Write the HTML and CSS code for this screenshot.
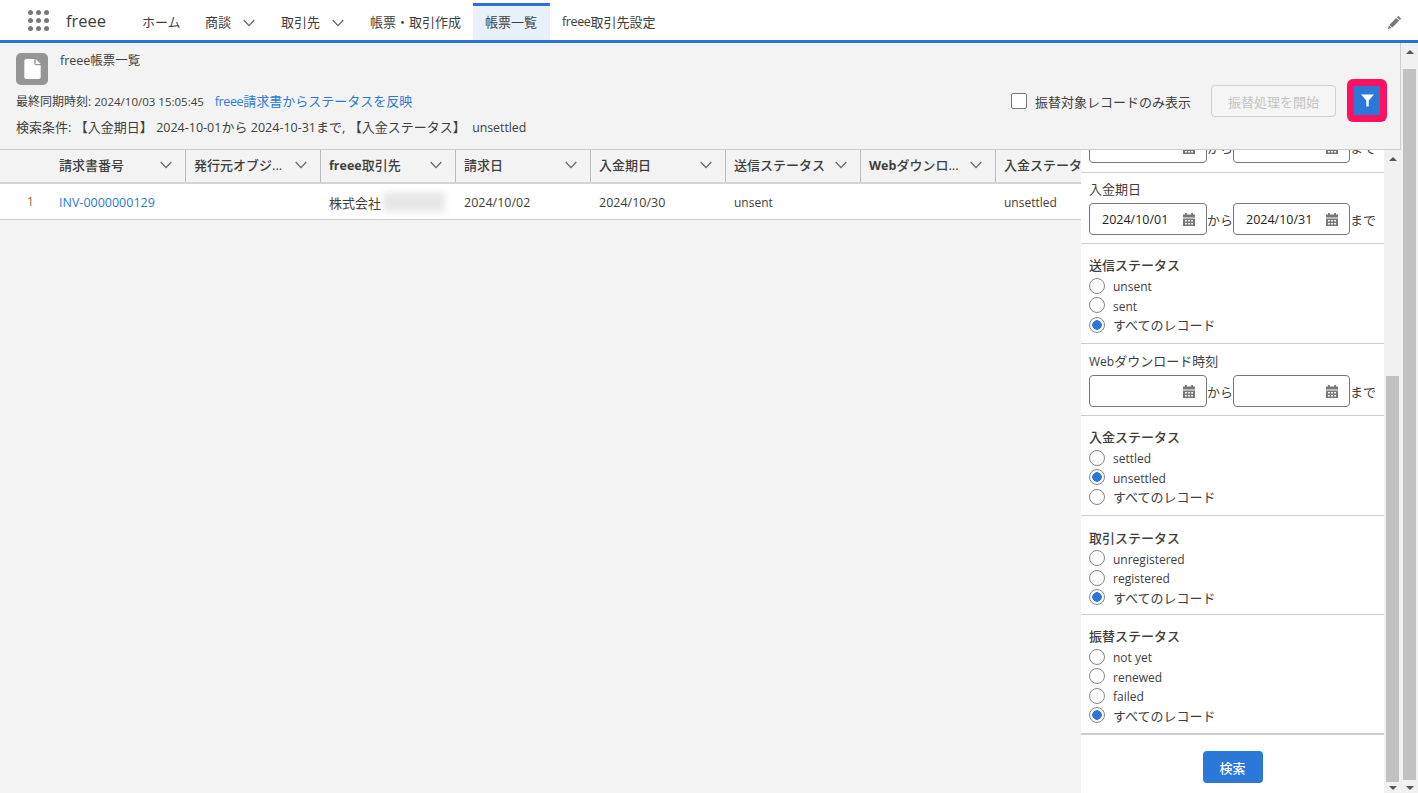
FILE: index.html
```html
<!DOCTYPE html>
<html lang="ja">
<head>
    <meta charset="UTF-8">
    <title>freee帳票一覧</title>
    <link rel="stylesheet" href="styles.css">
</head>
<body>
    <svg class="defs" width="0" height="0">
        <symbol id="chev" viewBox="0 0 12 8"><path d="M.7 1 6 6.600 11.300 1" fill="none" stroke="#666" stroke-width="1.300"/></symbol>
        <symbol id="cal" viewBox="0 0 12 13"><path d="M2 0h1.800v1.500h4.400V0H10v1.500h2v3H0v-3h2zM0 5.500h12V13H0z" fill="#777"/><path d="M2 7h1.800v1.500H2zM5.100 7h1.800v1.500H5.100zM8.200 7H10v1.500H8.200zM2 10h1.800v1.500H2zM5.100 10h1.800v1.500H5.100zM8.200 10H10v1.500H8.200z" fill="#fff"/></symbol>
    </svg>
    <div class="nav">
        <div class="apps">
            <i></i><i></i><i></i><i></i><i></i><i></i><i></i><i></i><i></i>
        </div>
        <div class="app_name">freee</div>
        <div class="tabs">
            <a class="tab t1">ホーム</a>
            <a class="tab t2">商談<svg class="nav_chev"><use href="#chev"/></svg></a>
            <a class="tab t3">取引先<svg class="nav_chev"><use href="#chev"/></svg></a>
            <a class="tab t4">帳票・取引作成</a>
            <a class="tab t5 active">帳票一覧</a>
            <a class="tab t6"><span class="lat">freee</span>取引先設定</a>
        </div>
        <svg class="pencil" viewBox="0 0 14 14"><path d="M10.300.8 13.200 3.700 11.800 5.100 8.900 2.200zM8.200 2.900 11.100 5.800 4.300 12.600 1.400 9.700zM.9 10.500 3.500 13.100 0 14z" fill="#777"/></svg>
    </div>
    <div class="page">
        <div class="content">
            <div class="head">
                <div class="head_left">
                    <div class="title_row">
                        <div class="doc_icon">
                            <svg viewBox="0 0 18 22" width="17" height="20"><path d="M2 0h9v5a2 2 0 0 0 2 2h5v13a2 2 0 0 1-2 2H2a2 2 0 0 1-2-2V2a2 2 0 0 1 2-2zM12.500 0 18 5.500h-5.500z" fill="#fff"/></svg>
                        </div>
                        <div class="page_title">freee帳票一覧</div>
                    </div>
                    <div class="sync_row">最終同期時刻: <span class="sync_time">2024/10/03 15:05:45</span><a class="sync_link"><span class="lat">freee</span>請求書からステータスを反映</a></div>
                    <div class="cond_row">検索条件: 【入金期日】 <span class="cond_val">2024-10-01</span>から <span class="cond_val">2024-10-31</span>まで, 【入金ステータス】 <span class="cond_end">unsettled</span></div>
                </div>
                <div class="head_right">
                    <label class="only_check"><input type="checkbox">振替対象レコードのみ表示</label>
                    <button class="start_btn">振替処理を開始</button>
                    <div class="filter_ring">
                        <button class="filter_btn">
                            <svg viewBox="0 0 13 13" width="13" height="13"><path d="M0 .5h13L7.700 6.500V12.500H5.300V6.500z" fill="#fff"/></svg>
                        </button>
                    </div>
                </div>
            </div>
            <div class="body">
                <div class="table_area">
                    <div class="thead">
                        <div class="num_cell"></div>
                        <div class="th">請求書番号<svg class="th_chev"><use href="#chev"/></svg></div>
                        <div class="th">発行元オブジ...<svg class="th_chev"><use href="#chev"/></svg></div>
                        <div class="th"><span><b>freee</b>取引先</span><svg class="th_chev"><use href="#chev"/></svg></div>
                        <div class="th">請求日<svg class="th_chev"><use href="#chev"/></svg></div>
                        <div class="th">入金期日<svg class="th_chev"><use href="#chev"/></svg></div>
                        <div class="th">送信ステータス<svg class="th_chev"><use href="#chev"/></svg></div>
                        <div class="th"><span><b>Web</b>ダウンロ...</span><svg class="th_chev"><use href="#chev"/></svg></div>
                        <div class="th">入金ステータス</div>
                    </div>
                    <div class="trow">
                        <div class="num_cell row_no">1</div>
                        <div class="td"><a class="inv_link">INV-0000000129</a></div>
                        <div class="td"></div>
                        <div class="td cjk">株式会社<span class="blurred"></span></div>
                        <div class="td">2024/10/02</div>
                        <div class="td">2024/10/30</div>
                        <div class="td small">unsent</div>
                        <div class="td"></div>
                        <div class="td small">unsettled</div>
                    </div>
                </div>
                <div class="filter_panel">
                    <div class="f_section first">
                        <div class="date_row">
                            <div class="date_box"><svg class="cal"><use href="#cal"/></svg></div><span class="kara">から</span>
                            <div class="date_box second"><svg class="cal"><use href="#cal"/></svg></div><span class="made">まで</span>
                        </div>
                    </div>
                    <div class="f_section date_sec">
                        <div class="f_label">入金期日</div>
                        <div class="date_row">
                            <div class="date_box"><span class="date_val">2024/10/01</span><svg class="cal"><use href="#cal"/></svg></div><span class="kara">から</span>
                            <div class="date_box second"><span class="date_val">2024/10/31</span><svg class="cal"><use href="#cal"/></svg></div><span class="made">まで</span>
                        </div>
                    </div>
                    <div class="f_section">
                        <div class="f_title">送信ステータス</div>
                        <label class="radio"><input type="radio" name="send"><span class="small">unsent</span></label>
                        <label class="radio"><input type="radio" name="send"><span class="small">sent</span></label>
                        <label class="radio"><input type="radio" name="send" checked>すべてのレコード</label>
                    </div>
                    <div class="f_section date_sec web_sec">
                        <div class="f_label"><span class="small">Web</span>ダウンロード時刻</div>
                        <div class="date_row">
                            <div class="date_box"><svg class="cal"><use href="#cal"/></svg></div><span class="kara">から</span>
                            <div class="date_box second"><svg class="cal"><use href="#cal"/></svg></div><span class="made">まで</span>
                        </div>
                    </div>
                    <div class="f_section">
                        <div class="f_title">入金ステータス</div>
                        <label class="radio"><input type="radio" name="pay"><span class="small">settled</span></label>
                        <label class="radio"><input type="radio" name="pay" checked><span class="small">unsettled</span></label>
                        <label class="radio"><input type="radio" name="pay">すべてのレコード</label>
                    </div>
                    <div class="f_section deal_sec">
                        <div class="f_title">取引ステータス</div>
                        <label class="radio"><input type="radio" name="deal"><span class="small">unregistered</span></label>
                        <label class="radio"><input type="radio" name="deal"><span class="small">registered</span></label>
                        <label class="radio"><input type="radio" name="deal" checked>すべてのレコード</label>
                    </div>
                    <div class="f_section last">
                        <div class="f_title">振替ステータス</div>
                        <label class="radio"><input type="radio" name="move"><span class="small">not yet</span></label>
                        <label class="radio"><input type="radio" name="move"><span class="small">renewed</span></label>
                        <label class="radio"><input type="radio" name="move"><span class="small">failed</span></label>
                        <label class="radio"><input type="radio" name="move" checked>すべてのレコード</label>
                    </div>
                    <div class="search_wrap"><button class="search_btn">検索</button></div>
                </div>
                <div class="bar inner_bar">
                    <span class="arrow up"></span>
                    <span class="thumb"></span>
                    <span class="arrow down"></span>
                </div>
            </div>
        </div>
        <div class="bar outer_bar">
            <span class="arrow up"></span>
            <span class="thumb"></span>
            <span class="arrow down"></span>
        </div>
    </div>
</body>
</html>
```

FILE: styles.css
```css
* {
    box-sizing: border-box;
}
body {
    margin: 0;
    width: 1418px;
    height: 793px;
    overflow: hidden;
    display: flex;
    flex-direction: column;
    background: #f3f3f3;
    color: #3e3e3c;
    font-family: "Open Sans", "Noto Sans CJK JP", sans-serif;
    font-size: 13px;
}
.defs {
    position: absolute;
}
.lat {
    font-size: 12.500px;
    letter-spacing: -0.400px;
}
.small {
    font-size: 12px;
}

/* top navigation */
.nav {
    height: 43px;
    flex: none;
    display: flex;
    align-items: center;
    background: #fff;
    border-bottom: 3px solid #2a72d4;
    padding-left: 28px;
    padding-right: 16px;
}
.apps {
    width: 21px;
    display: grid;
    grid-template-columns: repeat(3, 5px);
    gap: 3px;
}
.apps i {
    width: 5px;
    height: 5px;
    border-radius: 50%;
    background: #777;
}
.app_name {
    margin-left: 17px;
    width: 64px;
    font-size: 16.500px;
}
.tabs {
    display: flex;
    height: 37px;
    margin-top: 3px;
    flex: 1;
}
.tab {
    display: flex;
    align-items: center;
    height: 37px;
    padding-left: 12px;
    padding-bottom: 4px;
    border-top: 3px solid transparent;
    white-space: nowrap;
}
.t1 { width: 63px; }
.t2 { width: 76px; }
.t3 { width: 89px; }
.t4 { width: 115px; }
.t5 { width: 77px; }
.tab.active {
    background: #e8f0fa;
    border-top-color: #2a72d4;
}
.nav_chev {
    width: 12px;
    height: 8px;
    margin-left: 12px;
    margin-top: 3px;
}
.pencil {
    width: 14px;
    height: 14px;
    margin-top: 4px;
}

.page {
    flex: 1;
    display: flex;
    min-height: 0;
}
.content {
    width: 1401px;
    display: flex;
    flex-direction: column;
}

/* page header */
.head {
    height: 107px;
    flex: none;
    display: flex;
    justify-content: space-between;
    border-right: 1px solid #ccc;
    border-bottom: 1px solid #ccc;
    padding-left: 16px;
    padding-right: 13px;
}
.title_row {
    display: flex;
    padding-top: 10px;
}
.doc_icon {
    width: 32px;
    height: 32px;
    border-radius: 5px;
    background: #959595;
    display: flex;
    align-items: center;
    justify-content: center;
}
.page_title {
    margin-left: 12px;
    font-size: 12.500px;
    line-height: 16px;
}
.sync_row {
    margin-top: 6px;
    line-height: 20px;
    font-size: 12px;
    white-space: nowrap;
}
.sync_time {
    font-size: 11.500px;
}
.sync_link {
    margin-left: 11px;
    font-size: 13px;
    color: #2b7ad6;
}
.cond_row {
    margin-top: 5px;
    line-height: 20px;
    white-space: nowrap;
}
.cond_val {
    font-size: 12.500px;
}
.cond_end {
    font-size: 12.300px;
    margin-left: 3px;
}
.head_right {
    display: flex;
    align-items: flex-start;
    padding-top: 42px;
}
.only_check {
    display: flex;
    align-items: center;
    height: 32px;
}
.only_check input {
    appearance: none;
    width: 16px;
    height: 16px;
    margin: 0 8px 0 0;
    background: #fff;
    border: 1px solid #777;
    border-radius: 2px;
}
.start_btn {
    width: 125px;
    height: 32px;
    margin-left: 20px;
    border: 1px solid #d0d0d0;
    border-radius: 4px;
    background: #f5f5f5;
    color: #c4c4c4;
    font: inherit;
}
.filter_ring {
    width: 40px;
    height: 43px;
    margin-left: 11px;
    margin-top: -6px;
    border-radius: 6px;
    background: #ff1060;
    padding: 7px;
}
.filter_btn {
    width: 26px;
    height: 29px;
    border: 0;
    padding: 0;
    background: #2b78d8;
    display: flex;
    align-items: center;
    justify-content: center;
}

.body {
    flex: 1;
    display: flex;
    min-height: 0;
}

/* table */
.table_area {
    width: 1081px;
    overflow: hidden;
    flex: none;
}
.thead {
    display: flex;
    height: 34px;
    border-bottom: 2px solid #d4d4d4;
    font-weight: 500;
}
.trow {
    display: flex;
    height: 36px;
    padding-top: 1px;
    background: #fff;
    border-bottom: 1px solid #ccc;
    font-size: 12.500px;
}
.num_cell {
    width: 50px;
    flex: none;
}
.row_no {
    padding-left: 27px;
    line-height: 33px;
    color: #8a6d3b;
    font-size: 12px;
}
.th, .td {
    width: 135px;
    flex: none;
    padding-left: 9px;
    white-space: nowrap;
}
.th {
    display: flex;
    align-items: center;
    justify-content: space-between;
    padding-left: 8px;
    padding-right: 13px;
    padding-bottom: 4px;
    border-left: 1px solid #bbb;
}
.th:nth-child(2) {
    border-left: 0;
    padding-left: 9px;
}
.th:last-child {
    padding-right: 0;
}
.th b {
    font-weight: 700;
    font-size: 12.500px;
}
.td {
    display: flex;
    align-items: center;
}
.td.cjk {
    font-size: 13px;
}
.th_chev {
    width: 12px;
    height: 8px;
    flex: none;
    margin-top: 2px;
}
.inv_link {
    color: #2b7ad6;
}
.blurred {
    width: 62px;
    height: 20px;
    margin-left: 2px;
    background: #e8e8e8;
    filter: blur(3px);
}

/* filter panel */
.filter_panel {
    width: 303px;
    flex: none;
    overflow: hidden;
    background: #fff;
}
.f_section {
    height: 100px;
    padding: 12px 8px 0;
    border-bottom: 1px solid #ccc;
}
.f_section.first {
    height: 42px;
    margin-top: -19px;
    padding-top: 0;
}
.f_section.date_sec {
    height: 71px;
    padding-top: 7px;
}
.f_section.web_sec {
    height: 72px;
    padding-top: 8px;
}
.f_section.deal_sec {
    height: 99px;
    padding-top: 12.500px;
}
.f_section.last {
    height: 120px;
    border-bottom-width: 2px;
}
.f_title {
    height: 20px;
    line-height: 18px;
    font-weight: 500;
}
.f_label {
    height: 23px;
    line-height: 18px;
}
.radio {
    display: flex;
    align-items: center;
    height: 19.500px;
}
.radio .small {
    margin-top: 2px;
}
.radio input {
    appearance: none;
    width: 16px;
    height: 16px;
    margin: 0 8px 0 0;
    border: 1px solid #888;
    border-radius: 50%;
    background: #fff;
}
.radio input:checked {
    background: radial-gradient(circle, #2b78d8 0, #2b78d8 4.500px, #fff 5px);
}
.date_row {
    display: flex;
    align-items: center;
    height: 32px;
    white-space: nowrap;
}
.date_box {
    width: 118px;
    height: 32px;
    flex: none;
    padding-left: 12px;
    padding-right: 11px;
    display: flex;
    align-items: center;
    border: 1px solid #777;
    border-radius: 4px;
    background: #fff;
    color: #222;
}
.date_box.second {
    width: 117px;
}
.date_val {
    font-size: 12.500px;
}
.date_box .cal {
    width: 12px;
    height: 13px;
    margin-left: auto;
}
.kara {
    width: 26px;
    flex: none;
    text-align: center;
}
.made {
    flex: none;
}
.search_wrap {
    padding-top: 16px;
    text-align: center;
}
.search_btn {
    width: 60px;
    height: 32px;
    border: 0;
    border-radius: 4px;
    background: #2b78d8;
    color: #fff;
    font: inherit;
    font-weight: 500;
}

/* scrollbars */
.bar {
    width: 17px;
    flex: none;
    display: flex;
    flex-direction: column;
    align-items: center;
    background: #f1f1f1;
    position: relative;
}
.arrow {
    width: 0;
    height: 0;
    border-left: 4px solid transparent;
    border-right: 4px solid transparent;
    position: absolute;
}
.arrow.up {
    top: 7px;
    border-bottom: 4px solid #555;
}
.arrow.down {
    bottom: 3px;
    border-top: 4px solid #555;
}
.thumb {
    width: 13px;
    background: #c1c1c1;
}
.inner_bar .thumb {
    height: 406px;
    margin-top: 226px;
}
.outer_bar .thumb {
    height: 711px;
    margin-top: 26px;
}
```
